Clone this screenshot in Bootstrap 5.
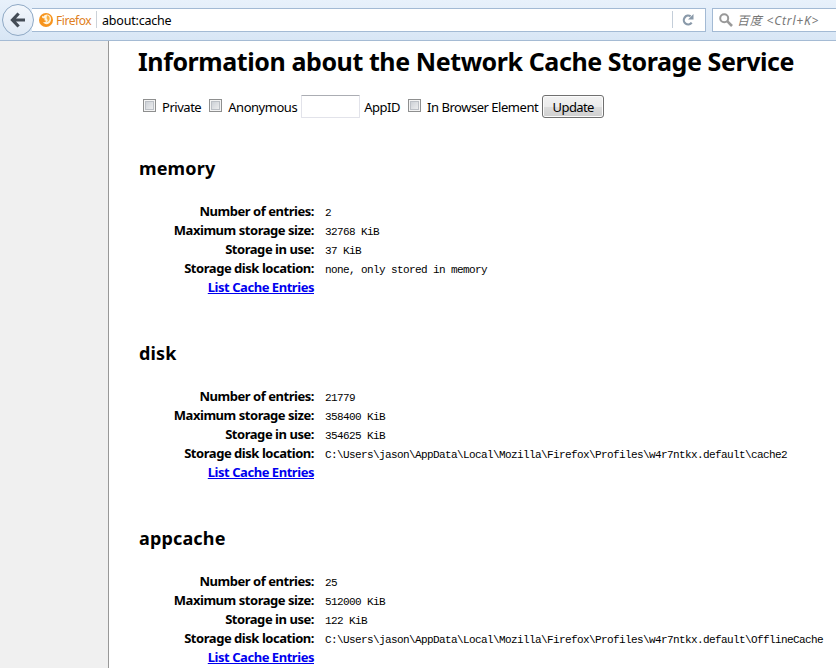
<!DOCTYPE html>
<html lang="en">
<head>
<meta charset="utf-8">
<title>Network Cache Storage Information</title>
<link rel="stylesheet" href="https://cdn.jsdelivr.net/npm/bootstrap@5.3.0/dist/css/bootstrap.min.css">
<style>
body{font-family:"Noto Sans","Open Sans","Noto Sans CJK SC",sans-serif;color:#000;height:668px;font-size:13px}
.toolbar{height:41px;background:linear-gradient(#e8f1fb,#d8e6f5);border-bottom:1px solid #a5bbd4;padding:0 0 1px 2px}
.back-btn{width:32px;height:32px;z-index:2;background:linear-gradient(#f3f7fc,#dfe9f5);border:1px solid #8fa9c5}
.url-box{width:674px;height:24px;margin-left:-2px;border:1px solid #a3bad4;border-left:0;padding-left:7px}
.search-box{height:24px;margin-left:6px;border:1px solid #a3bad4;border-right:0;padding-left:6px}
.identity{color:#e08021;font-size:12px;letter-spacing:-.45px;width:41px;margin-left:3px;padding-top:2px}
.url-rule{width:1px;height:17px;background:#ccd2d9;margin-left:-1px}
.address{font-size:12.5px;letter-spacing:-.2px;margin-left:5px;padding-top:3px}
.reload{width:33px;height:17px;border-left:1px solid #c4ced9;padding-right:2px}
.hint{font-size:12px;color:#777;font-style:italic;letter-spacing:.8px;margin-left:4px;padding-top:2px}
.gutter{width:109px;background:#f0f0f0;border-right:1px solid #989898}
.page-body{padding:4px 0 0 29px}
.page-title{font-size:25px;line-height:32px;letter-spacing:-.42px;height:32px}
.options{height:24px;margin-top:18px;padding-left:5px;line-height:24px;letter-spacing:-.47px}
.tick{appearance:none;width:13px;height:13px;border:1px solid #8e8f8f;background:linear-gradient(135deg,#c4c9d0,#f5f5f5);box-shadow:inset 0 0 0 1px #f4f4f4,inset 0 0 0 2px #bcc0c6;margin:-4px 6px 0 0}
.app-id{width:59px;height:23px;border:1px solid #e2e3ea;border-top-color:#abadb3;border-radius:1px;margin:-1px 4px 0 0}
.update{width:62px;height:23px;margin-top:-1px;border:1px solid #707070;border-radius:3px;padding:2px 0 0;color:#000;font-size:13px;line-height:19px;letter-spacing:-.6px;background:linear-gradient(#f2f2f2 0,#ebebeb 50%,#ddd 50%,#cfcfcf 100%);box-shadow:inset 0 0 0 1px #fbfbfb}
.stores{padding-top:36px}
.store{height:185px}
.store:last-child{height:143px}
.store-name{font-size:18px;line-height:26px;height:26px;letter-spacing:.15px;margin-bottom:21px;padding-left:1px}
.facts{display:grid;grid-template-columns:176px 1fr;column-gap:11px;grid-auto-rows:19px;line-height:19px}
.facts dt{text-align:right;font-weight:700;white-space:nowrap;letter-spacing:-.46px}
.facts dd{font-family:"Liberation Mono",monospace;font-size:11px;letter-spacing:-.6px;margin:0;padding-top:2px;white-space:pre;height:19px}
.facts a{color:#00e}
</style>
<script src="https://cdn.jsdelivr.net/npm/bootstrap@5.3.0/dist/js/bootstrap.bundle.min.js"></script>
</head>
<body class="d-flex flex-column overflow-hidden bg-white">
<header class="toolbar d-flex align-items-center flex-shrink-0">
  <button class="back-btn rounded-circle p-0 d-flex align-items-center justify-content-center flex-shrink-0 position-relative" aria-label="Back">
    <svg width="16" height="16" viewBox="0 0 16 16" fill="none" stroke="#444c56" stroke-width="3.2"><path d="M8.600 1.500 2.500 8l6.100 6.500M3 8h12"/></svg>
  </button>
  <div class="url-box bg-white d-flex align-items-center flex-shrink-0">
    <svg width="14" height="14" viewBox="0 0 14 14"><circle cx="7" cy="7" r="7" fill="#f7941d"/><path d="M3 2.800 4.400 3.500C5.500 1.500 8.500.8 10.500 2.500c2.400 2 2 6-.2 7.700-2.300 1.700-5.300 1-6.300-1.200 1.500.6 2.600.1 3.300-.9L5 7.100l1.200-1.400L3.300 5Z" fill="#fff3dc"/><path d="M8 2.200c2 .4 3 2.300 2.600 4.100-.4 1.600-1.600 2.700-3.100 2.900l1.300-2-1.300-2Z" fill="#fbb040"/></svg>
    <span class="identity">Firefox</span><span class="url-rule"></span>
    <span class="address flex-grow-1">about:cache</span>
    <span class="reload d-flex align-items-center justify-content-center"><svg width="12" height="12" viewBox="0 0 12 12"><path d="M9.700 8.700A4.400 4.400 0 1 1 8.600 2.300" fill="none" stroke="#8999a9" stroke-width="2.200"/><path d="M11.500 0v5.600H6Z" fill="#8999a9"/></svg></span>
  </div>
  <div class="search-box bg-white d-flex align-items-center flex-grow-1">
    <svg width="14" height="14" viewBox="0 0 14 14" fill="none" stroke="#999"><circle cx="5.200" cy="5.200" r="4" stroke-width="2"/><path d="m8.200 8.200 4.800 4.800" stroke-width="2.600"/></svg>
    <span class="hint text-nowrap">百度 &lt;Ctrl+K&gt;</span>
  </div>
</header>
<div class="d-flex flex-grow-1">
  <aside class="gutter flex-shrink-0"></aside>
  <main class="page-body flex-grow-1">
    <h1 class="page-title fw-bold text-nowrap m-0">Information about the Network Cache Storage Service</h1>
    <form class="options d-flex align-items-center text-nowrap">
      <input type="checkbox" class="tick" id="priv"><label for="priv" class="me-2">Private</label>
      <input type="checkbox" class="tick" id="anon"><label for="anon" class="me-1">Anonymous</label>
      <input type="text" class="app-id" id="appid"><label for="appid" class="me-2">AppID</label>
      <input type="checkbox" class="tick" id="inbrowser"><label for="inbrowser" class="me-1">In Browser Element</label>
      <button type="button" class="update">Update</button>
    </form>
    <div class="stores">
      <section class="store">
        <h2 class="store-name fw-bold">memory</h2>
        <dl class="facts m-0"><dt>Number of entries:</dt><dd>2</dd><dt>Maximum storage size:</dt><dd>32768 KiB</dd><dt>Storage in use:</dt><dd>37 KiB</dd><dt>Storage disk location:</dt><dd>none, only stored in memory</dd><dt><a href="#">List Cache Entries</a></dt></dl>
      </section>
      <section class="store">
        <h2 class="store-name fw-bold">disk</h2>
        <dl class="facts m-0"><dt>Number of entries:</dt><dd>21779</dd><dt>Maximum storage size:</dt><dd>358400 KiB</dd><dt>Storage in use:</dt><dd>354625 KiB</dd><dt>Storage disk location:</dt><dd>C:\Users\jason\AppData\Local\Mozilla\Firefox\Profiles\w4r7ntkx.default\cache2</dd><dt><a href="#">List Cache Entries</a></dt></dl>
      </section>
      <section class="store">
        <h2 class="store-name fw-bold">appcache</h2>
        <dl class="facts m-0"><dt>Number of entries:</dt><dd>25</dd><dt>Maximum storage size:</dt><dd>512000 KiB</dd><dt>Storage in use:</dt><dd>122 KiB</dd><dt>Storage disk location:</dt><dd>C:\Users\jason\AppData\Local\Mozilla\Firefox\Profiles\w4r7ntkx.default\OfflineCache</dd><dt><a href="#">List Cache Entries</a></dt></dl>
      </section>
    </div>
  </main>
</div>
</body>
</html>
